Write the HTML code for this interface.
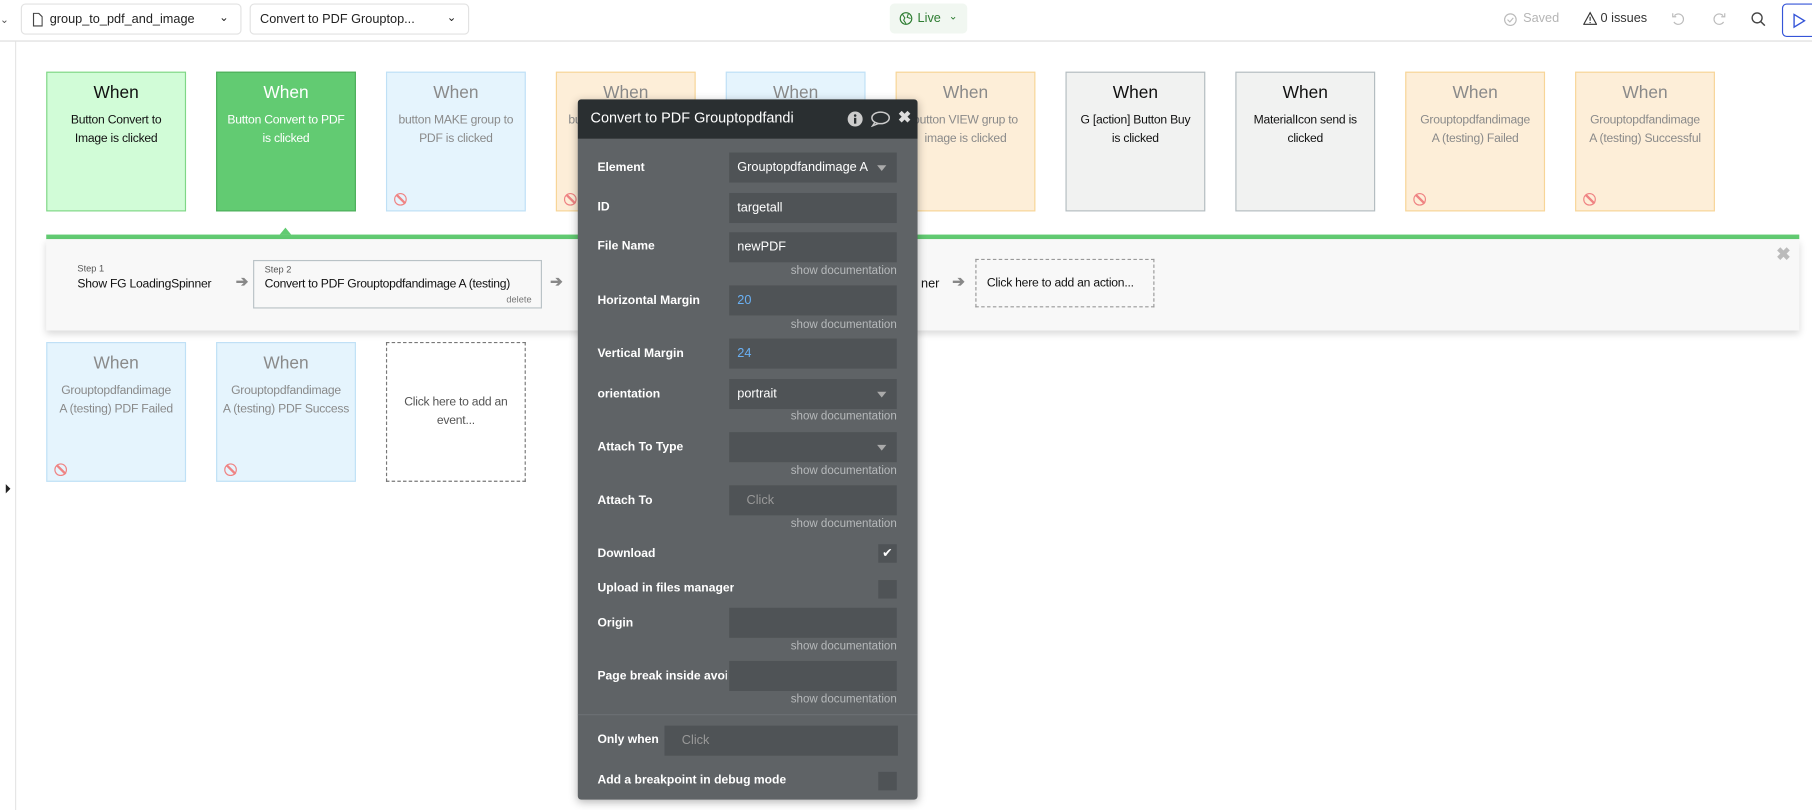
<!DOCTYPE html>
<html><head><meta charset="utf-8">
<style>
html,body{margin:0;padding:0;background:#fff;overflow:hidden;width:1812px;height:810px}
#w{position:absolute;left:0;top:0;width:1568px;height:701px;transform:scale(1.15561,1.15549);transform-origin:0 0;font-family:"Liberation Sans",sans-serif;color:#222}
.a{position:absolute}
.dd{position:absolute;top:3px;height:27px;border:1px solid #e2e2e2;border-radius:4px;font-size:11px;line-height:27px;box-sizing:border-box}
.card{position:absolute;width:121px;height:121px;box-sizing:border-box;border:1px solid;text-align:center;font-size:10.5px;line-height:16px;letter-spacing:-.2px}
.card .wh{font-size:15px;margin:9px 0 6px;line-height:18px;letter-spacing:0}
.g1{background:#d1fcd7;border-color:#7fd686;color:#111}
.g2{background:#62cb72;border-color:#4cae5a;color:#fff}
.bl{background:#e5f4fd;border-color:#bfe0f6;color:#8a8a8a}
.or{background:#fdeed8;border-color:#f7d597;color:#8a8a8a}
.gr{background:#f1f2f1;border-color:#b3bcc0;color:#111}
.ban{position:absolute;left:6px;bottom:4px;width:9px;height:9px;border:1.5px solid #ef8383;border-radius:50%}
.ban:after{content:"";position:absolute;left:4px;top:-1px;width:1.5px;height:11px;background:#ef8383;transform:rotate(-45deg)}
.lbl{position:absolute;left:17px;font-size:10.5px;color:#fff;font-weight:bold;white-space:nowrap;overflow:hidden;max-width:112px}
.inp{position:absolute;left:131px;width:145px;height:26px;background:#4f5356;font-size:11px;line-height:26px;color:#fff;padding-left:7px;box-sizing:border-box}
.doc{position:absolute;right:18px;font-size:10px;color:#b6b9bb}
.tri{position:absolute;right:9px;top:11px;border-left:4px solid transparent;border-right:4px solid transparent;border-top:5px solid #aaa}
.cb{position:absolute;left:260px;width:16px;height:16px;background:#4f5356}
.arr{position:absolute;color:#888;font-size:13px;font-weight:bold}
</style></head><body><div id="w">
<div class="a" style="left:0;top:35px;width:1568px;height:1px;background:#dcdcdc"></div>
<div class="a" style="left:13px;top:36px;width:1px;height:665px;background:#e6e6e6"></div>
<div class="a" style="left:0;top:12px;font-size:9px;color:#555">⌄</div>
<div class="a" style="left:5px;top:419px;border-top:4px solid transparent;border-bottom:4px solid transparent;border-left:4px solid #222"></div>
<div class="dd" style="left:18px;width:191px;padding-left:24px">group_to_pdf_and_image
<svg class="a" style="left:9px;top:7px" width="9" height="12" viewBox="0 0 9 12"><path d="M1 .5h4.5L8.5 3.5v8H1z" fill="none" stroke="#444"/></svg>
<span class="a" style="right:10px;top:-2px;font-size:10px">⌄</span></div>
<div class="dd" style="left:216px;width:190px;padding-left:8px">Convert to PDF Grouptop...<span class="a" style="right:10px;top:-2px;font-size:10px">⌄</span></div>
<div class="a" style="left:770px;top:3px;width:67px;height:26px;background:#f1f7f1;border-radius:4px;font-size:11px;line-height:26px;color:#2e7d32">
<svg class="a" style="left:8px;top:7px" width="12" height="12" viewBox="0 0 12 12"><circle cx="6" cy="6" r="5" fill="none" stroke="#2e7d32"/><path d="M3 2.5l2 3-1 2 2 3M8 2l-1 3 3 1" fill="none" stroke="#2e7d32" stroke-width=".9"/></svg>
<span class="a" style="left:24px">Live</span><span class="a" style="left:51px;top:-2px;font-size:9px">⌄</span></div>
<svg class="a" style="left:1301px;top:11px" width="12" height="12"><circle cx="6" cy="6" r="5" fill="none" stroke="#bbb"/><path d="M3.5 6l2 2 3-3.5" fill="none" stroke="#bbb"/></svg>
<div class="a" style="left:1318px;top:10px;font-size:11px;color:#b5b5b5">Saved</div>
<svg class="a" style="left:1370px;top:10px" width="12" height="12"><path d="M6 1L11.5 11H.5z" fill="none" stroke="#333"/><path d="M6 4.5v3.5M6 9v1" stroke="#333"/></svg>
<div class="a" style="left:1385px;top:10px;font-size:11px;color:#333">0 issues</div>
<svg class="a" style="left:1446px;top:10px" width="13" height="13"><path d="M3 3.5A4.5 4.5 0 1 1 2.5 9" fill="none" stroke="#bbb"/><path d="M1.5 1.5v3h3" fill="none" stroke="#bbb"/></svg>
<svg class="a" style="left:1481px;top:10px" width="13" height="13"><path d="M10 3.5A4.5 4.5 0 1 0 10.5 9" fill="none" stroke="#bbb"/><path d="M11.5 1.5v3h-3" fill="none" stroke="#bbb"/></svg>
<svg class="a" style="left:1515px;top:10px" width="13" height="13"><circle cx="5.5" cy="5.5" r="4.3" fill="none" stroke="#444" stroke-width="1.2"/><path d="M8.7 8.7l3.5 3.5" stroke="#444" stroke-width="1.3"/></svg>
<div class="a" style="left:1542px;top:3px;width:30px;height:29px;border:1.3px solid #3555d8;border-radius:4px;box-sizing:border-box">
<svg class="a" style="left:8px;top:7px" width="12" height="14"><path d="M1.5 1.5l9 5.5-9 5.5z" fill="none" stroke="#3555d8" stroke-width="1.2"/></svg></div>

<div class="card g1" style="left:40px;top:62px"><div class="wh">When</div>Button Convert to<br>Image is clicked</div>
<div class="card g2" style="left:187px;top:62px"><div class="wh">When</div>Button Convert to PDF<br>is clicked</div>
<div class="card bl" style="left:334px;top:62px"><div class="wh">When</div>button MAKE group to<br>PDF is clicked<div class="ban"></div></div>
<div class="card or" style="left:481px;top:62px"><div class="wh">When</div>button MAKE group to<br>image is clicked<div class="ban"></div></div>
<div class="card bl" style="left:628px;top:62px"><div class="wh">When</div>button VIEW grup to<br>PDF is clicked</div>
<div class="card or" style="left:775px;top:62px"><div class="wh">When</div>button VIEW grup to<br>image is clicked<div class="ban"></div></div>
<div class="card gr" style="left:922px;top:62px"><div class="wh">When</div>G [action] Button Buy<br>is clicked</div>
<div class="card gr" style="left:1069px;top:62px"><div class="wh">When</div>MaterialIcon send is<br>clicked</div>
<div class="card or" style="left:1216px;top:62px"><div class="wh">When</div>Grouptopdfandimage<br>A (testing) Failed<div class="ban"></div></div>
<div class="card or" style="left:1363px;top:62px"><div class="wh">When</div>Grouptopdfandimage<br>A (testing) Successful<div class="ban"></div></div>

<div class="a" style="left:242px;top:197px;border-left:5px solid transparent;border-right:5px solid transparent;border-bottom:6px solid #62cb72"></div>
<div class="a" style="left:40px;top:203px;width:1517px;height:4px;background:#62cb72"></div>
<div class="a" style="left:40px;top:207px;width:1517px;height:79px;background:#f8f8f8;box-shadow:0 3px 6px rgba(0,0,0,.15)"></div>
<div class="a" style="left:67px;top:228px;font-size:8px;color:#555">Step 1</div>
<div class="a" style="left:67px;top:240px;font-size:10.5px;color:#111;letter-spacing:-.2px">Show FG LoadingSpinner</div>
<div class="arr" style="left:204px;top:236px">➔</div>
<div class="a" style="left:219px;top:225px;width:250px;height:42px;border:1px solid #b9c2c6;background:#f8f8f8;box-sizing:border-box">
<div class="a" style="left:9px;top:3px;font-size:8px;color:#555">Step 2</div>
<div class="a" style="left:9px;top:14px;font-size:10.5px;color:#111;white-space:nowrap;letter-spacing:-.25px">Convert to PDF Grouptopdfandimage A (testing)</div>
<div class="a" style="right:8px;top:29px;font-size:8px;color:#777">delete</div></div>
<div class="arr" style="left:476px;top:236px">➔</div>
<div class="a" style="left:797px;top:240px;font-size:11px;color:#111">ner</div>
<div class="arr" style="left:824px;top:236px">➔</div>
<div class="a" style="left:844px;top:224px;width:155px;height:42px;border:1px dashed #999;box-sizing:border-box;font-size:10.5px;line-height:40px;padding-left:9px;color:#111;letter-spacing:-.2px">Click here to add an action...</div>
<div class="a" style="left:1537px;top:211px;font-size:15px;color:#bbb;font-weight:bold">✖</div>

<div class="card bl" style="left:40px;top:296px"><div class="wh">When</div>Grouptopdfandimage<br>A (testing) PDF Failed<div class="ban"></div></div>
<div class="card bl" style="left:187px;top:296px"><div class="wh">When</div>Grouptopdfandimage<br>A (testing) PDF Success<div class="ban"></div></div>
<div class="card" style="left:334px;top:296px;border:1px dashed #777;background:#fff;color:#555;padding-top:43px">Click here to add an<br>event...</div>

<div class="a" style="left:500px;top:86px;width:294px;height:606px;background:#5f6366;box-shadow:0 2px 8px rgba(0,0,0,.3);border-radius:3px;overflow:hidden">
<div class="a" style="left:0;top:0;width:294px;height:34px;background:#2a2f31"></div>
<div class="a" style="left:11px;top:9px;font-size:12.5px;color:#fff">Convert to PDF Grouptopdfandi</div>
<svg class="a" style="left:233px;top:10px" width="14" height="14"><circle cx="7" cy="7" r="6.5" fill="#ccc"/><rect x="6" y="6" width="2" height="5" fill="#2a2f31"/><circle cx="7" cy="4" r="1.1" fill="#2a2f31"/></svg>
<svg class="a" style="left:253px;top:10px" width="18" height="14"><ellipse cx="9" cy="6" rx="7.5" ry="5" fill="none" stroke="#ccc" stroke-width="1.3"/><path d="M4 10l-2 3 5-2" fill="none" stroke="#ccc" stroke-width="1.2"/></svg>
<div class="a" style="left:277px;top:7px;font-size:14px;color:#ddd;font-weight:bold">✖</div>

<div class="lbl" style="top:53px">Element</div>
<div class="inp" style="top:46px">Grouptopdfandimage A<div class="tri"></div></div>
<div class="lbl" style="top:87px">ID</div>
<div class="inp" style="top:81px">targetall</div>
<div class="lbl" style="top:121px">File Name</div>
<div class="inp" style="top:115px">newPDF</div>
<div class="doc" style="top:143px">show documentation</div>
<div class="lbl" style="top:168px">Horizontal Margin</div>
<div class="inp" style="top:161px;color:#6ab0f3">20</div>
<div class="doc" style="top:190px">show documentation</div>
<div class="lbl" style="top:214px">Vertical Margin</div>
<div class="inp" style="top:207px;color:#6ab0f3">24</div>
<div class="lbl" style="top:249px">orientation</div>
<div class="inp" style="top:242px">portrait<div class="tri"></div></div>
<div class="doc" style="top:269px">show documentation</div>
<div class="lbl" style="top:295px">Attach To Type</div>
<div class="inp" style="top:288px"><div class="tri"></div></div>
<div class="doc" style="top:316px">show documentation</div>
<div class="lbl" style="top:341px">Attach To</div>
<div class="inp" style="top:334px;color:#999"><span style="margin-left:8px">Click</span></div>
<div class="doc" style="top:362px">show documentation</div>
<div class="lbl" style="top:387px">Download</div>
<div class="cb" style="top:385px;color:#fff;font-size:11px;line-height:16px;text-align:center">✔</div>
<div class="lbl" style="top:417px;max-width:200px">Upload in files manager</div>
<div class="cb" style="top:416px"></div>
<div class="lbl" style="top:447px">Origin</div>
<div class="inp" style="top:440px"></div>
<div class="doc" style="top:468px">show documentation</div>
<div class="lbl" style="top:493px">Page break inside avoi</div>
<div class="inp" style="top:486px"></div>
<div class="doc" style="top:514px">show documentation</div>
<div class="a" style="left:0;top:532px;width:294px;height:1px;background:#6c7073"></div>
<div class="lbl" style="top:548px">Only when</div>
<div class="inp" style="top:542px;left:75px;width:202px;color:#999"><span style="margin-left:8px">Click</span></div>
<div class="lbl" style="top:583px;max-width:250px">Add a breakpoint in debug mode</div>
<div class="cb" style="top:582px"></div>
</div>
</div></body></html>
